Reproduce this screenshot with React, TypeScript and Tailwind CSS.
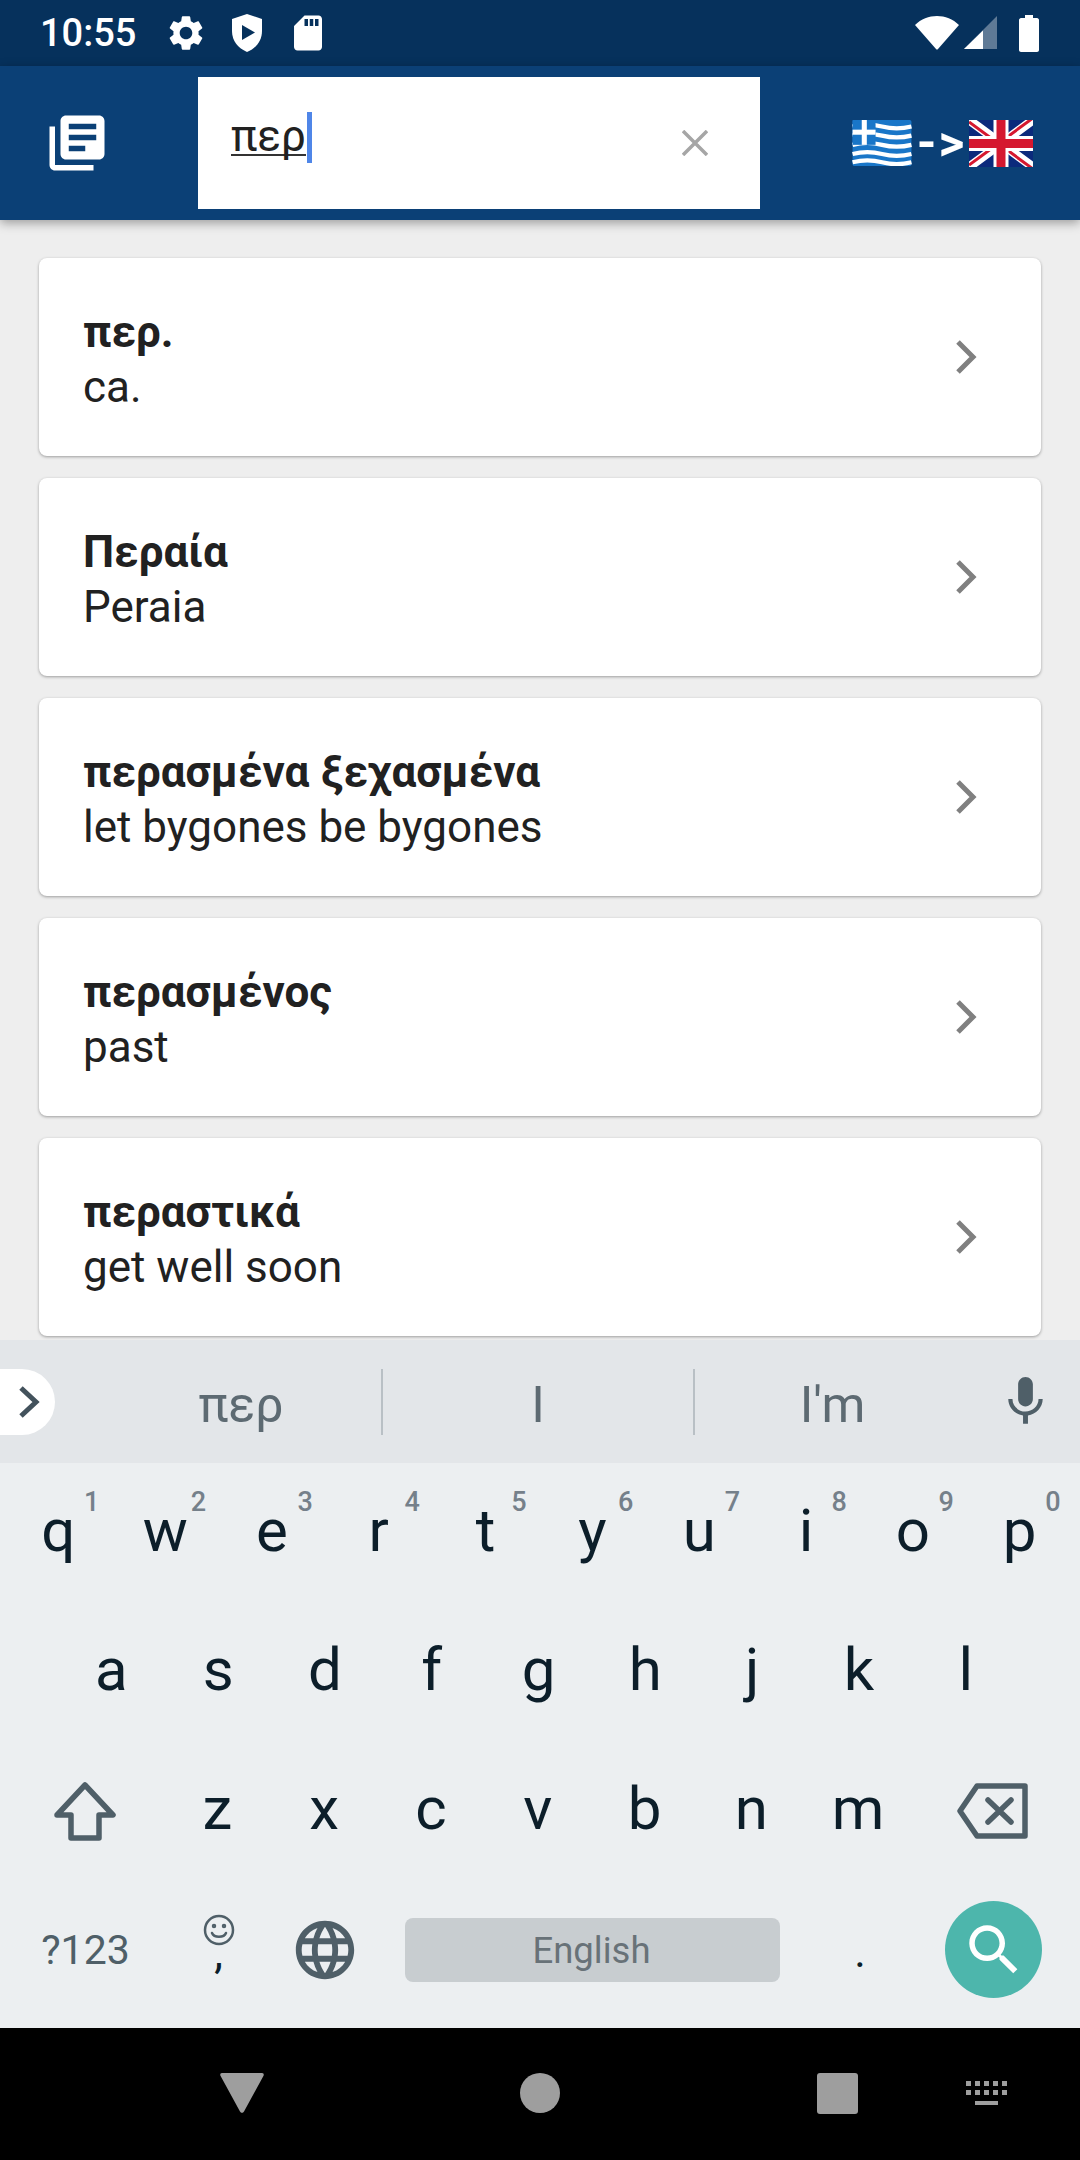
const results = [
  { title: "περ.", sub: "ca." },
  { title: "Περαία", sub: "Peraia" },
  { title: "περασμένα ξεχασμένα", sub: "let bygones be bygones" },
  { title: "περασμένος", sub: "past" },
  { title: "περαστικά", sub: "get well soon" },
];

function Icon({ d, size, className }: { d: string; size: number; className?: string }) {
  return (
    <svg width={size} height={size} viewBox="0 0 24 24" fill="currentColor" className={className}>
      <path d={d} />
    </svg>
  );
}

const GEAR =
  "M19.14 12.94c.04-.3.06-.61.06-.94 0-.32-.02-.64-.07-.94l2.03-1.58c.18-.14.23-.41.12-.61l-1.92-3.32c-.12-.22-.37-.29-.59-.22l-2.39.96c-.5-.38-1.03-.7-1.62-.94l-.36-2.54c-.04-.24-.24-.41-.48-.41h-3.84c-.24 0-.43.17-.47.41l-.36 2.54c-.59.24-1.13.57-1.62.94l-2.39-.96c-.22-.08-.47 0-.59.22L2.74 8.87c-.12.21-.08.47.12.61l2.03 1.58c-.05.3-.09.63-.09.94s.02.64.07.94l-2.03 1.58c-.18.14-.23.41-.12.61l1.92 3.32c.12.22.37.29.59.22l2.39-.96c.5.38 1.03.7 1.62.94l.36 2.54c.05.24.24.41.48.41h3.84c.24 0 .44-.17.47-.41l.36-2.54c.59-.24 1.13-.56 1.62-.94l2.39.96c.22.08.47 0 .59-.22l1.92-3.32c.12-.22.07-.47-.12-.61l-2.01-1.58zM12 15.6c-1.98 0-3.6-1.62-3.6-3.6s1.62-3.6 3.6-3.6 3.6 1.62 3.6 3.6-1.62 3.6-3.6 3.6z";
const SD =
  "M18 2h-8L4.02 8 4 20c0 1.1.9 2 2 2h12c1.1 0 2-.9 2-2V4c0-1.1-.9-2-2-2zm-6 6h-2V4h2v4zm3 0h-2V4h2v4zm3 0h-2V4h2v4z";
const BOOKS =
  "M4 6H2v14c0 1.1.9 2 2 2h14v-2H4V6zm16-4H8c-1.1 0-2 .9-2 2v12c0 1.1.9 2 2 2h12c1.1 0 2-.9 2-2V4c0-1.1-.9-2-2-2zm-1 9H9V9h10v2zm-4 4H9v-2h6v2zm4-8H9V5h10v2z";
const MIC =
  "M12 14c1.66 0 3-1.34 3-3V5c0-1.66-1.34-3-3-3S9 3.34 9 5v6c0 1.66 1.34 3 3 3zm5.3-3c0 3-2.54 5.1-5.3 5.1S6.7 14 6.7 11H5c0 3.41 2.72 6.23 6 6.72V21h2v-3.28c3.28-.48 6-3.3 6-6.72h-1.7z";
const GLOBE =
  "M11.99 2C6.47 2 2 6.48 2 12s4.47 10 9.99 10C17.52 22 22 17.52 22 12S17.52 2 11.99 2zm6.93 6h-2.95c-.32-1.25-.78-2.45-1.38-3.56 1.84.63 3.37 1.91 4.33 3.56zM12 4.04c.83 1.2 1.48 2.53 1.91 3.96h-3.82c.43-1.43 1.08-2.76 1.91-3.96zM4.26 14C4.1 13.36 4 12.69 4 12s.1-1.36.26-2h3.38c-.08.66-.14 1.32-.14 2 0 .68.06 1.34.14 2H4.26zm.82 2h2.95c.32 1.25.78 2.45 1.38 3.56-1.84-.63-3.37-1.9-4.33-3.56zm2.95-8H5.08c.96-1.66 2.49-2.93 4.33-3.56C8.81 5.55 8.35 6.75 8.03 8zM12 19.96c-.83-1.2-1.48-2.53-1.91-3.96h3.82c-.43 1.43-1.08 2.76-1.91 3.96zM14.34 14H9.66c-.09-.66-.16-1.32-.16-2 0-.68.07-1.35.16-2h4.68c.09.65.16 1.32.16 2 0 .68-.07 1.34-.16 2zm.25 5.56c.6-1.11 1.06-2.31 1.38-3.56h2.95c-.96 1.65-2.49 2.93-4.33 3.56zM16.36 14c.08-.66.14-1.32.14-2 0-.68-.06-1.34-.14-2h3.38c.16.64.26 1.31.26 2s-.1 1.36-.26 2h-3.38z";
const SEARCH =
  "M15.5 14h-.79l-.28-.27C15.41 12.59 16 11.11 16 9.5 16 5.91 13.09 3 9.5 3S3 5.91 3 9.5 5.91 16 9.5 16c1.61 0 3.09-.59 4.23-1.57l.27.28v.79l5 4.99L20.49 19l-4.99-5zm-6 0C7.01 14 5 11.99 5 9.5S7.01 5 9.5 5 14 7.01 14 9.5 11.99 14 9.5 14z";

function StatusBar() {
  return (
    <div className="flex h-[66px] shrink-0 items-center bg-[#06315c] pl-[40px] text-white">
      <span className="w-[97px] text-[38px] leading-none font-medium">10:55</span>
      <div className="ml-[28px] flex h-[42px] items-center">
        <Icon d={GEAR} size={42} />
        <svg width="32" height="38" viewBox="0 0 32 38" className="ml-[24px]">
          <path d="M16 0 L31 5 V17 C31 27 25 34 16 38 C7 34 1 27 1 17 V5 Z" fill="#fff" />
          <path d="M11 11 L24 18.5 L11 26 Z" fill="#06315c" />
        </svg>
        <Icon d={SD} size={42} className="ml-[24px]" />
      </div>
      <div className="ml-auto flex items-center pr-[41px]">
        <svg width="44" height="34" viewBox="0 0 44 34">
          <path d="M0 9 C12 -3 32 -3 44 9 L23 33 C22.4 33.7 21.6 33.7 21 33 Z" fill="#fff" />
        </svg>
        <svg width="34" height="34" viewBox="0 0 34 34" className="ml-[5px]">
          <path d="M33 0 V33 H0 Z" fill="#5f7a96" />
          <path d="M19 14.5 V33 H0 Z" fill="#fff" />
        </svg>
        <svg width="20" height="37" viewBox="0 0 20 37" className="ml-[21px]">
          <path d="M6 0 H14 V3 H18 C19 3 20 4 20 5 V35 C20 36 19 37 18 37 H2 C1 37 0 36 0 35 V5 C0 4 1 3 2 3 H6 Z" fill="#fff" />
        </svg>
      </div>
    </div>
  );
}

function GreekFlag() {
  const ys = [6, 16, 26, 36, 45];
  return (
    <svg width="64" height="46" viewBox="0 0 64 50">
      <rect width="64" height="50" rx="2" fill="#1976c8" />
      {ys.map((y) => (
        <path key={y} d={`M0 ${y + 1} Q16 ${y - 3} 32 ${y + 1} T64 ${y + 1}`} stroke="#fff" strokeWidth="4.6" fill="none" />
      ))}
      <rect x="0" y="0" width="25" height="27" fill="#1976c8" />
      <rect x="10" y="0" width="5.5" height="27" fill="#fff" />
      <rect x="0" y="10.5" width="25" height="5.5" fill="#fff" />
    </svg>
  );
}

function UkFlag() {
  return (
    <svg width="64" height="47" viewBox="0 0 64 47">
      <rect width="64" height="47" rx="2" fill="#0b2a7c" />
      <path d="M0 0 L64 47 M64 0 L0 47" stroke="#fff" strokeWidth="9" />
      <path d="M0 2 L64 49 M64 -2 L0 45" stroke="#d5182f" strokeWidth="3" />
      <path d="M32 0 V47 M0 23.5 H64" stroke="#fff" strokeWidth="15" />
      <path d="M32 0 V47 M0 23.5 H64" stroke="#d5182f" strokeWidth="9" />
    </svg>
  );
}

function AppBar() {
  return (
    <div className="z-10 flex h-[154px] shrink-0 items-center bg-[#0b4076] shadow-[0_3px_10px_rgba(0,0,0,0.35)]">
      <div className="flex w-[198px] justify-center pr-[44px] text-white">
        <Icon d={BOOKS} size={66} />
      </div>
      <div className="flex h-[132px] w-[562px] items-center bg-white pl-[33px] pr-[52px]">
        <span className="flex items-center pb-[12px]">
          <span className="border-b-[2px] border-[#333] text-[44px] leading-[36px] text-[#212121]">περ</span>
          <span className="ml-[1px] h-[51px] w-[5px] bg-[#4f86e8]" />
        </span>
        <svg width="26" height="26" viewBox="0 0 26 26" className="ml-auto" stroke="#a6a6a6" strokeWidth="3.5">
          <path d="M1 1 L25 25 M25 1 L1 25" />
        </svg>
      </div>
      <div className="ml-[90px] flex items-center">
        <GreekFlag />
        <span className="w-[55px] text-center text-[50px] leading-none font-bold tracking-[2px] text-white">-&gt;</span>
        <UkFlag />
      </div>
    </div>
  );
}

function ResultCard({ title, sub }: { title: string; sub: string }) {
  return (
    <div className="flex h-[198px] shrink-0 items-center rounded-[8px] bg-white pl-[44px] pr-[63px] shadow-[0_1px_3px_rgba(0,0,0,0.35)]">
      <div className="flex-1 pt-[6px] text-[#212121]">
        <div className="text-[44px] leading-[55px] font-bold">{title}</div>
        <div className="text-[44px] leading-[55px]">{sub}</div>
      </div>
      <svg width="24" height="36" viewBox="0 0 24 36" fill="none" stroke="#808080" strokeWidth="5">
        <path d="M4 3 L19 18 L4 33" />
      </svg>
    </div>
  );
}

function Key({ label, hint }: { label: string; hint?: string }) {
  return (
    <div className="relative flex h-full w-[106.8px] shrink-0 items-center justify-center pb-[4px] pr-[2px] text-[60px] leading-none text-[#0c1e2a]">
      {label}
      {hint && (
        <span className="absolute left-[78px] top-[26px] text-[27px] leading-none font-medium text-[#75808a]">{hint}</span>
      )}
    </div>
  );
}

function SuggestionStrip() {
  return (
    <div className="flex h-[123px] shrink-0 items-center bg-[#e3e6e9] text-[50px] leading-none text-[#5d6a72]">
      <div className="flex h-[66px] w-[55px] items-center rounded-r-[33px] bg-white pl-[18px]">
        <svg width="22" height="34" viewBox="0 0 22 34" fill="none" stroke="#43525c" strokeWidth="5">
          <path d="M3 3 L18 17 L3 31" />
        </svg>
      </div>
      <div className="flex w-[326px] justify-center pl-[92px] pr-[46px] pt-[6px]">περ</div>
      <div className="h-[66px] w-[2px] bg-[#b9c0c5]" />
      <div className="flex w-[310px] justify-center pt-[6px]">I</div>
      <div className="h-[66px] w-[2px] bg-[#b9c0c5]" />
      <div className="flex w-[275px] justify-center pt-[6px]">I'm</div>
      <Icon d={MIC} size={59} className="ml-[26px] text-[#4f5f68]" />
    </div>
  );
}

function Keyboard() {
  const rowOne = "qwertyuiop".split("");
  return (
    <div className="shrink-0 bg-[#eceff1] pb-[9px] font-['Roboto',sans-serif]">
      <SuggestionStrip />
      <div className="flex h-[139px] px-[6px]">
        {rowOne.map((k, i) => (
          <Key key={k} label={k} hint={String((i + 1) % 10)} />
        ))}
      </div>
      <div className="flex h-[139px] pl-[59px]">
        {"asdfghjkl".split("").map((k) => (
          <Key key={k} label={k} />
        ))}
      </div>
      <div className="flex h-[139px] items-center">
        <div className="flex w-[165px] justify-center pl-[5px]">
          <svg width="64" height="60" viewBox="0 0 64 60" fill="none" stroke="#4f5f68" strokeWidth="5.5" strokeLinejoin="round">
            <path d="M32 4 L60 34 H46 V57 H18 V34 H4 Z" />
          </svg>
        </div>
        {"zxcvbnm".split("").map((k) => (
          <Key key={k} label={k} />
        ))}
        <div className="flex w-[160px] justify-center">
          <svg width="72" height="56" viewBox="0 0 72 56" fill="none" stroke="#4f5f68" strokeWidth="5.5" strokeLinejoin="round">
            <path d="M20 3 H68 V53 H20 L3 28 Z" />
            <path d="M31 17 L54 39 M54 17 L31 39" strokeLinecap="round" />
          </svg>
        </div>
      </div>
      <div className="flex h-[139px] items-center">
        <div className="w-[165px] pl-[6px] pt-[2px] text-center text-[41px] leading-none text-[#4f5f68]">?123</div>
        <div className="flex w-[107px] flex-col items-center">
          <svg width="32" height="32" viewBox="0 0 32 32" fill="none" stroke="#4f5f68" strokeWidth="2.5" strokeLinecap="round">
            <circle cx="16" cy="16" r="14" />
            <path d="M9 19 C11 24 21 24 23 19" />
            <circle cx="11" cy="12" r="1" />
            <circle cx="21" cy="12" r="1" />
          </svg>
          <span className="h-[40px] text-[44px] leading-[14px] text-[#0c1e2a]">,</span>
        </div>
        <div className="flex w-[107px] justify-center pr-[2px] text-[#4f5f68]">
          <Icon d={GLOBE} size={70} />
        </div>
        <div className="ml-[26px] flex h-[64px] w-[375px] items-center justify-center rounded-[8px] bg-[#c8cdd0] pr-[2px] pt-[4px] text-[36.5px] leading-none text-[#687278]">
          English
        </div>
        <div className="ml-[27px] w-[106px] pt-[4px] text-center text-[44px] leading-none text-[#0c1e2a]">.</div>
        <div className="ml-[32px] flex h-[97px] w-[97px] items-center justify-center rounded-full bg-[#4db6ac] text-white">
          <Icon d={SEARCH} size={66} />
        </div>
      </div>
    </div>
  );
}

function NavBar() {
  return (
    <div className="flex h-[132px] shrink-0 items-center bg-black pb-[2px] pl-[220px]">
      <svg width="44" height="40" viewBox="0 0 44 40">
        <path d="M2 0 H42 C44 0 44 2 43.4 3 L24 38.5 C23 40.3 21 40.3 20 38.5 L0.6 3 C0 2 0 0 2 0 Z" fill="#9e9e9e" />
      </svg>
      <div className="ml-[256px] h-[40px] w-[40px] rounded-full bg-[#9e9e9e]" />
      <div className="ml-[257px] h-[41px] w-[41px] rounded-[3px] bg-[#9e9e9e]" />
      <svg width="42" height="24" viewBox="0 0 42 24" className="ml-[108px]" fill="#9e9e9e">
        {[0, 9, 18, 27, 36].map((x) => (
          <g key={x}>
            <rect x={x} y="0" width="5" height="5" />
            <rect x={x} y="9" width="5" height="5" />
          </g>
        ))}
        <rect x="9" y="20" width="23" height="4" />
      </svg>
    </div>
  );
}

export default function App() {
  return (
    <div className="flex h-[2160px] w-[1080px] flex-col overflow-hidden bg-[#eeeeee] font-['Roboto',sans-serif]">
      <StatusBar />
      <AppBar />
      <div className="flex h-[1120px] shrink-0 flex-col gap-[22px] overflow-hidden px-[39px] pt-[38px]">
        {results.map((r) => (
          <ResultCard key={r.title} title={r.title} sub={r.sub} />
        ))}
      </div>
      <Keyboard />
      <NavBar />
    </div>
  );
}
